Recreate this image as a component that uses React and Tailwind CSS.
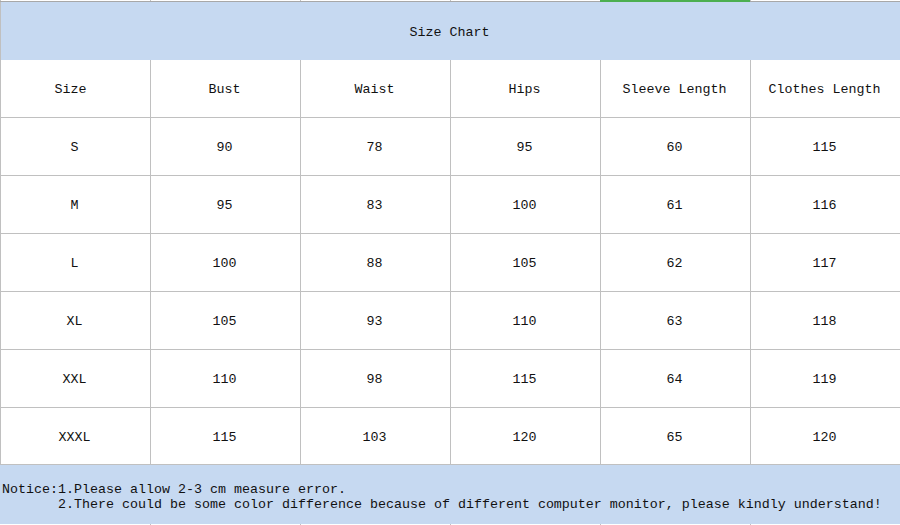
import React from "react";

const headers = ["Size\u00a0", "Bust", "Waist", "Hips", "Sleeve Length", "Clothes Length"];
const rows = [
  ["S", "90", "78", "95", "60", "115"],
  ["M", "95", "83", "100", "61", "116"],
  ["L", "100", "88", "105", "62", "117"],
  ["XL", "105", "93", "110", "63", "118"],
  ["XXL", "110", "98", "115", "64", "119"],
  ["XXXL", "115", "103", "120", "65", "120"],
];

function Row({ cells, h }) {
  return (
    <div className={`grid grid-cols-[150px_150px_150px_150px_150px_150px] ${h} border-b border-[#c0c0c0]`}>
      {cells.map((c, i) => (
        <div
          key={i}
          className="flex items-center justify-center pt-[2px] pr-[2px] border-l border-[#c0c0c0] whitespace-pre"
        >
          {c}
        </div>
      ))}
    </div>
  );
}

export default function App() {
  return (
    <div
      className="w-[900px] h-[525px] bg-white text-[#111] text-[13.33px] leading-[15px] overflow-hidden flex flex-col"
      style={{ fontFamily: '"Liberation Mono", "DejaVu Sans Mono", monospace' }}
    >
      {/* top strip */}
      <div className="grid grid-cols-[150px_150px_150px_150px_150px_150px] h-[2px]">
        {[0, 1, 2, 3, 4, 5].map((i) =>
          i === 4 ? (
            <div key={i} className="bg-[#4caf50]" />
          ) : (
            <div key={i} className="flex flex-col">
              <div className="h-[1px] bg-white border-l border-[#c0c0c0]" />
              <div className="h-[1px] bg-[#a8a8a8]" />
            </div>
          )
        )}
      </div>
      {/* title */}
      <div className="h-[58px] bg-[#c6d9f1] border-l border-[#c0c0c0] flex items-center justify-center pt-[2px] pr-[2px]">
        Size Chart
      </div>
      <Row cells={headers} h="h-[58px]" />
      {rows.map((r, i) => (
        <Row key={i} cells={r} h={i === rows.length - 1 ? "h-[57px]" : "h-[58px]"} />
      ))}
      {/* notice */}
      <div className="h-[59px] bg-[#c6d9f1] pt-[17px] pl-[2px] whitespace-pre">
        <div>Notice:1.Please allow 2-3 cm measure error.</div>
        <div>{"       2.There could be some color difference because of different computer monitor, please kindly understand!"}</div>
      </div>
      <div className="grid grid-cols-[150px_150px_150px_150px_150px_150px] h-[1px]">
        {[0, 1, 2, 3, 4, 5].map((i) => (
          <div key={i} className={`bg-white ${i > 0 ? "border-l border-[#c0c0c0]" : ""}`} />
        ))}
      </div>
    </div>
  );
}
